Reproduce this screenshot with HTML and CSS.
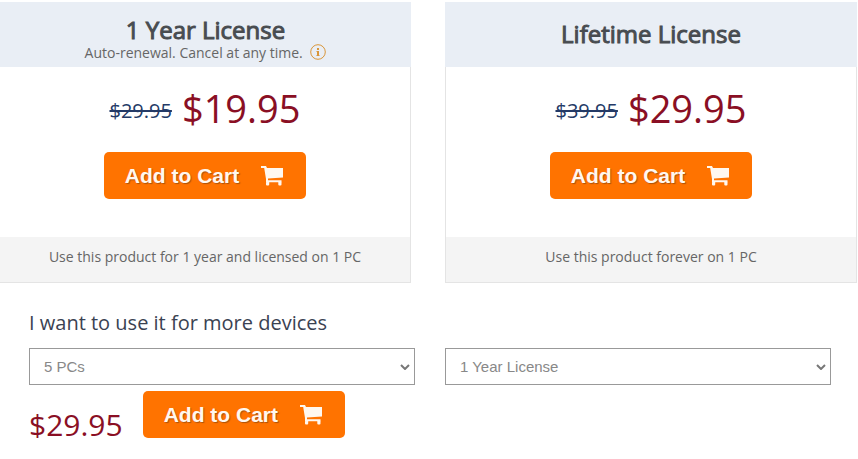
FILE: index.html
```html
<!DOCTYPE html>
<html lang="en">
<head>
  <meta charset="UTF-8">
  <meta name="viewport" content="width=device-width, initial-scale=1.0">
  <title>Buy License</title>
  <link rel="stylesheet" href="styles.css">
</head>
<body>

  <!-- cart icon shared by all buttons -->
  <svg class="sprite" width="0" height="0" aria-hidden="true">
    <symbol id="cart" viewBox="0 0 24 20">
      <path d="M1 0h5l1 2h16v9.500L8 12.500V14.200h13.500v2H6V13L4.200 2H1z"/>
      <rect x="6" y="15.500" width="3.200" height="4" rx="1"/>
      <rect x="18.300" y="15.500" width="3.200" height="4" rx="1"/>
    </symbol>
  </svg>

  <div class="plans">
    <section class="plan">
      <div class="plan-head with-note">
        <h2>1 Year License</h2>
        <p class="renewal">
          Auto-renewal. Cancel at any time.
          <svg class="info" viewBox="0 0 16 16" aria-hidden="true">
            <circle cx="8" cy="8" r="7.300"/>
            <path d="M7 4h2v2H7zM6.500 7H9v4h.5v1h-3v-1H7V8h-.5z"/>
          </svg>
        </p>
      </div>
      <div class="plan-body">
        <p class="price-row"><del>$29.95</del> <span class="price">$19.95</span></p>
        <button class="cart-btn" type="button">Add to Cart <svg class="cart"><use href="#cart"/></svg></button>
      </div>
      <p class="plan-foot">Use this product for 1 year and licensed on 1 PC</p>
    </section>

    <section class="plan">
      <div class="plan-head">
        <h2>Lifetime License</h2>
      </div>
      <div class="plan-body">
        <p class="price-row"><del>$39.95</del> <span class="price">$29.95</span></p>
        <button class="cart-btn" type="button">Add to Cart <svg class="cart"><use href="#cart"/></svg></button>
      </div>
      <p class="plan-foot">Use this product forever on 1 PC</p>
    </section>
  </div>

  <section class="more">
    <h3>I want to use it for more devices</h3>
    <div class="options">
      <div class="select-box">
        <select id="deviceSelect" aria-label="Number of devices">
          <option>5 PCs</option>
        </select>
        <svg class="arrow" viewBox="0 0 10 6" aria-hidden="true"><path d="M1 1l4 4 4-4"/></svg>
      </div>
      <div class="select-box">
        <select id="licenseSelect" aria-label="License type">
          <option>1 Year License</option>
          <option>Lifetime License</option>
        </select>
        <svg class="arrow" viewBox="0 0 10 6" aria-hidden="true"><path d="M1 1l4 4 4-4"/></svg>
      </div>
    </div>
    <div class="order">
      <span class="total">$29.95</span>
      <button class="cart-btn" type="button">Add to Cart <svg class="cart"><use href="#cart"/></svg></button>
    </div>
  </section>

</body>
</html>
```
FILE: styles.css
```css
* {
  box-sizing: border-box;
}

body {
  font-family: "Open Sans", sans-serif;
  font-size: 14px;
  line-height: 20px;
  color: #666;
  background-color: #fff;
  margin: 0;
  padding-top: 2px;
}

h2, h3, p {
  margin: 0;
  font-weight: 400;
}

.sprite {
  position: absolute;
}

/* Plan cards */
.plans {
  display: grid;
  grid-template-columns: 411fr 412fr;
  gap: 34px;
  padding-right: 1px;
}

.plan {
  display: flex;
  flex-direction: column;
  border: 1px solid #e4e4e4;
  border-top: none;
  text-align: center;
}

.plan:first-child {
  border-left: none;
}

.plan-head {
  display: flex;
  flex-direction: column;
  justify-content: center;
  height: 65px;
  margin: 0 -1px;
  padding-bottom: 2px;
  background-color: #e9eef5;
}

.plan:first-child .plan-head {
  margin-left: 0;
}

.plan-head.with-note {
  justify-content: flex-end;
  padding-bottom: 4px;
}

.plan-head h2 {
  font-size: 24px;
  line-height: 26px;
  color: #484c50;
  -webkit-text-stroke: 1px #484c50;
}

.info {
  width: 16px;
  height: 16px;
  margin-left: 4px;
  vertical-align: -2px;
  fill: #d9963a;
}

.info circle {
  fill: none;
  stroke: #d9963a;
}

.plan-body {
  display: flex;
  flex-direction: column;
  align-items: center;
  padding: 15px 0 38px;
}

.price-row {
  display: flex;
  align-items: center;
  gap: 10px;
  line-height: 52px;
  margin-bottom: 18px;
}

.price-row del {
  font-size: 20px;
  line-height: 28px;
  padding-top: 6px;
  color: #243a66;
}

.price {
  font-size: 38px;
  color: #8a0f24;
}

.plan-foot {
  padding: 10px 0 15px;
  background-color: #f4f4f4;
}

.cart-btn {
  display: flex;
  align-items: center;
  gap: 21px;
  height: 47px;
  padding: 0 22px 0 21px;
  border: none;
  border-radius: 5px;
  background-color: #ff7300;
  color: #fff8f0;
  font: bold 21px "Liberation Sans", Arial, sans-serif;
  text-shadow: 1px 1px 1px rgba(90, 50, 20, 0.5);
  cursor: pointer;
}

.cart {
  width: 24px;
  height: 20px;
  fill: #fff8f0;
}

/* More devices */
.more {
  padding: 26px 27px 0 29px;
}

.more h3 {
  font-size: 20px;
  line-height: 28px;
  color: #3a4252;
  margin-bottom: 11px;
}

.options {
  display: grid;
  grid-template-columns: 1fr 1fr;
  gap: 30px;
}

.select-box {
  display: grid;
  align-items: center;
}

.select-box select,
.select-box .arrow {
  grid-area: 1 / 1;
}

.select-box select {
  appearance: none;
  width: 100%;
  height: 37px;
  padding: 0 14px;
  border: 1px solid #999;
  border-radius: 0;
  background-color: #fff;
  color: #888;
  font: 15px "Liberation Sans", Arial, sans-serif;
}

.arrow {
  justify-self: end;
  width: 10px;
  height: 6px;
  margin-right: 5px;
  fill: none;
  stroke: #777;
  stroke-width: 2;
  pointer-events: none;
}

.order {
  display: flex;
  align-items: flex-start;
  gap: 20px;
  padding-top: 6px;
}

.total {
  font-size: 30px;
  line-height: 40px;
  padding-top: 14px;
  color: #8a0f24;
}
```
